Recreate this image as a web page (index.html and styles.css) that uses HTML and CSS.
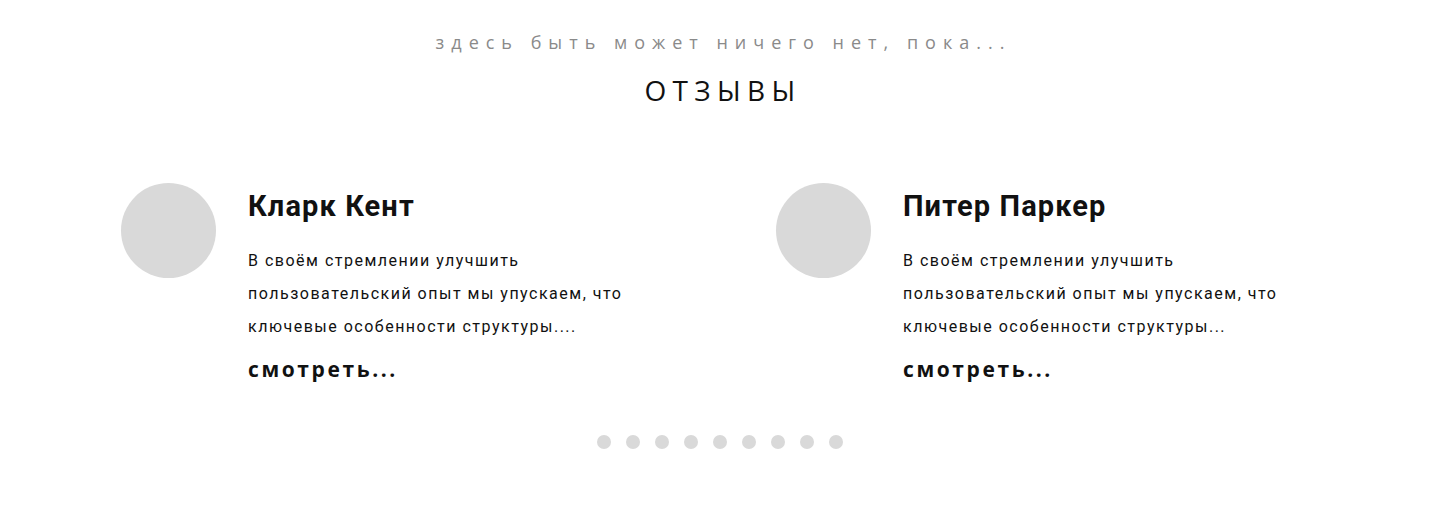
FILE: index.html
```html
<!DOCTYPE html>
<html lang="ru">
<head>
<meta charset="utf-8">
<title>Отзывы</title>
<link rel="stylesheet" href="styles.css">
</head>
<body>
<section class="reviews">
  <p class="subtitle">здесь быть может ничего нет, пока...</p>
  <h2 class="title">ОТЗЫВЫ</h2>
  <div class="cards">
    <article class="card">
      <div class="avatar"></div>
      <div class="content">
        <h3 class="name">Кларк Кент</h3>
        <p class="text">В своём стремлении улучшить пользовательский опыт мы упускаем, что ключевые особенности структуры....</p>
        <a class="more" href="#">смотреть...</a>
      </div>
    </article>
    <article class="card">
      <div class="avatar"></div>
      <div class="content">
        <h3 class="name">Питер Паркер</h3>
        <p class="text">В своём стремлении улучшить пользовательский опыт мы упускаем, что ключевые особенности структуры...</p>
        <a class="more" href="#">смотреть...</a>
      </div>
    </article>
  </div>
  <div class="dots">
    <span class="dot"></span><span class="dot"></span><span class="dot"></span>
    <span class="dot"></span><span class="dot"></span><span class="dot"></span>
    <span class="dot"></span><span class="dot"></span><span class="dot"></span>
  </div>
</section>
</body>
</html>
```

FILE: styles.css
```css
* { box-sizing: border-box; }
html, body { margin: 0; padding: 0; background: #fff; }
body { font-family: Roboto, "Liberation Sans", sans-serif; color: #111; }

.reviews {
  padding-top: 30px;
  display: flex;
  flex-direction: column;
  align-items: center;
}
.subtitle {
  margin: 0;
  padding-left: 7px;
  font-family: "Open Sans", "Liberation Sans", sans-serif;
  font-size: 18px;
  line-height: 24px;
  letter-spacing: 7px;
  color: #8a8a8a;
  font-weight: 400;
}
.title {
  margin: 20px 0 0;
  padding-left: 6px;
  font-family: "Open Sans", "Liberation Sans", sans-serif;
  font-weight: 500;
  font-size: 28px;
  line-height: 32px;
  letter-spacing: 6.3px;
  color: #111;
}
.cards {
  align-self: stretch;
  margin-top: 77px;
  padding-left: 121px;
  display: grid;
  grid-template-columns: 655px 655px;
}
.card {
  display: flex;
  align-items: flex-start;
  gap: 32px;
}
.avatar {
  width: 95px;
  height: 95px;
  border-radius: 50%;
  background: #d9d9d9;
  flex: none;
}
.content { padding-top: 3px; }
.name {
  margin: 0;
  font-size: 29px;
  line-height: 40px;
  font-weight: 700;
  letter-spacing: 1.1px;
  color: #111;
}
.text {
  margin: 18px 0 0;
  width: 420px;
  font-size: 16px;
  line-height: 33px;
  letter-spacing: 1.5px;
  color: #111;
}
.more {
  display: inline-block;
  margin-top: 12px;
  font-family: "Open Sans", "Liberation Sans", sans-serif;
  font-size: 21px;
  font-weight: 700;
  letter-spacing: 2.6px;
  color: #111;
  text-decoration: none;
  line-height: 28px;
}
.dots {
  margin-top: 52px;
  display: flex;
  gap: 15px;
}
.dot {
  width: 14px;
  height: 14px;
  border-radius: 50%;
  background: #d9d9d9;
}
```
